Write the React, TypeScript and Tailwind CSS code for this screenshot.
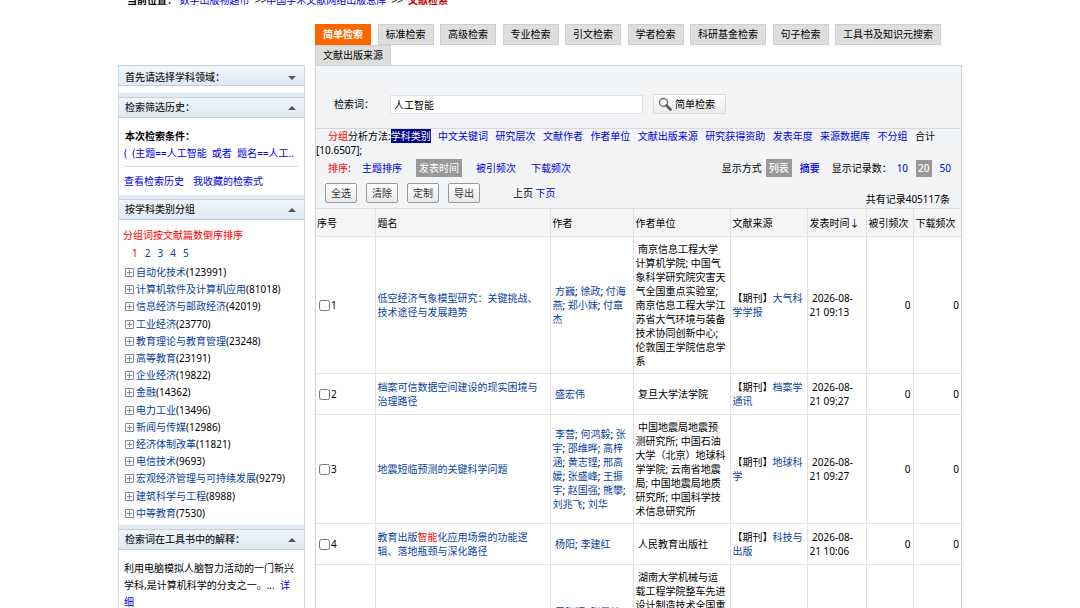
import type { ReactNode } from 'react';

const tabs = ['简单检索', '标准检索', '高级检索', '专业检索', '引文检索', '学者检索', '科研基金检索', '句子检索', '工具书及知识元搜索'];

const subjects = [
  { name: '自动化技术', count: 123991 },
  { name: '计算机软件及计算机应用', count: 81018 },
  { name: '信息经济与邮政经济', count: 42019 },
  { name: '工业经济', count: 23770 },
  { name: '教育理论与教育管理', count: 23248 },
  { name: '高等教育', count: 23191 },
  { name: '企业经济', count: 19822 },
  { name: '金融', count: 14362 },
  { name: '电力工业', count: 13496 },
  { name: '新闻与传媒', count: 12986 },
  { name: '经济体制改革', count: 11821 },
  { name: '电信技术', count: 9693 },
  { name: '宏观经济管理与可持续发展', count: 9279 },
  { name: '建筑科学与工程', count: 8988 },
  { name: '中等教育', count: 7530 },
];

const groupings = ['中文关键词', '研究层次', '文献作者', '作者单位', '文献出版来源', '研究获得资助', '发表年度', '来源数据库', '不分组'];

const columns = ['序号', '题名', '作者', '作者单位', '文献来源', '发表时间↓', '被引频次', '下载频次'];

interface Article {
  title: ReactNode;
  authors: string[];
  units: string;
  source: string;
  date: string;
}

const articles: Article[] = [
  {
    title: '低空经济气象模型研究：关键挑战、技术途径与发展趋势',
    authors: ['方巍', '徐政', '付海燕', '郑小妹', '付章杰'],
    units: '南京信息工程大学计算机学院; 中国气象科学研究院灾害天气全国重点实验室; 南京信息工程大学江苏省大气环境与装备技术协同创新中心; 伦敦国王学院信息学系',
    source: '大气科学学报',
    date: '2026-08-21 09:13',
  },
  {
    title: '档案可信数据空间建设的现实困境与治理路径',
    authors: ['盛宏伟'],
    units: '复旦大学法学院',
    source: '档案学通讯',
    date: '2026-08-21 09:27',
  },
  {
    title: '地震短临预测的关键科学问题',
    authors: ['李营', '何鸿毅', '张宇', '邵维晔', '高梓涵', '黄志铿', '邢高媛', '张盛峰', '王振宇', '赵国强', '熊攀', '刘兆飞', '刘华'],
    units: '中国地震局地震预测研究所; 中国石油大学（北京）地球科学学院; 云南省地震局; 中国地震局地质研究所; 中国科学技术信息研究所',
    source: '地球科学',
    date: '2026-08-21 09:27',
  },
  {
    title: (
      <>
        教育出版<span className="text-[#ff0000]">智能</span>化应用场景的功能逻辑、落地瓶颈与深化路径
      </>
    ),
    authors: ['杨阳', '李建红'],
    units: '人民教育出版社',
    source: '科技与出版',
    date: '2026-08-21 10:06',
  },
  {
    title: '面向智能制造的机械系统优化设计',
    authors: ['周张颖', '张雪松', '李明华', '王建国', '陈思远'],
    units: '湖南大学机械与运载工程学院整车先进设计制造技术全国重点实验室; 湖南大学机器人视觉感知与控制技术国家工程研究中心; 湖南省智能制造协同创新中心',
    source: '机械工程学报',
    date: '2026-08-21 10:12',
  },
];

function PanelHeader({ title, open = true }: { title: string; open?: boolean }) {
  return (
    <button
      type="button"
      className={`flex h-[21px] w-full items-center justify-between border-y border-[#c5d0dc] bg-linear-to-b from-[#f0f5fb] to-[#dfe9f4] pr-2 pl-[6px] font-medium text-[#222] ${
        open ? '' : 'pt-1'
      }`}
    >
      {title}
      <svg width="8" height="4" viewBox="0 0 8 4" className="fill-[#555]">
        <path d={open ? 'M4 0L8 4H0Z' : 'M0 0H8L4 4Z'} />
      </svg>
    </button>
  );
}

function Strip() {
  return <div className="h-1 bg-[#e2eaf3]" />;
}

function Link({ children, className = 'text-[#0000e0]' }: { children: ReactNode; className?: string }) {
  return (
    <a href="#" className={className}>
      {children}
    </a>
  );
}

function Sidebar() {
  return (
    <aside className="w-[187px] shrink-0 border-x border-[#d3dae2] bg-white">
      <PanelHeader title="首先请选择学科领域：" open={false} />
      <div className="h-[7px]" />
      <Strip />
      <PanelHeader title="检索筛选历史：" />
      <div className="px-[5px] pt-[10px] pb-px leading-[17px]">
        <p className="pl-px font-bold">本次检索条件：</p>
        <p className="overflow-hidden border-b border-[#ddd] pb-1 whitespace-nowrap">
          <Link>(&nbsp; (主题==人工智能&nbsp; 或者&nbsp; 题名==人工..</Link>
        </p>
        <p className="flex gap-[9px] pt-[6px] pb-1">
          <Link>查看检索历史</Link>
          <Link>我收藏的检索式</Link>
        </p>
      </div>
      <Strip />
      <PanelHeader title="按学科类别分组" />
      <div className="px-1 pt-[6px] pb-[3px]">
        <p className="leading-[18px] text-[#ff0000]">分组词按文献篇数倒序排序</p>
        <nav className="flex gap-[7px] pl-[9px] leading-[18px]">
          <Link className="text-[#ff0000]">1</Link>
          {[2, 3, 4, 5].map((page) => (
            <Link key={page} className="text-[#0a3fa0]">
              {page}
            </Link>
          ))}
        </nav>
        <ul className="mt-[2px] grid h-[258px]">
          {subjects.map((subject) => (
            <li key={subject.name} className="flex items-center pl-[2px] leading-[17px]">
              <button type="button" aria-label={subject.name} className="mr-[2px]">
                <svg width="9" height="9" viewBox="0 0 9 9" fill="none" className="stroke-[#7f8ba0]">
                  <path d="M.5 .5H8.500V8.500H.5ZM2 4.500H7M4.500 2V7" />
                </svg>
              </button>
              <Link className="text-[#0a3fa0]">{subject.name}</Link>({subject.count})
            </li>
          ))}
        </ul>
      </div>
      <Strip />
      <PanelHeader title="检索词在工具书中的解释：" />
      <p className="py-[10px] pr-2 pl-[5px] leading-[17px]">
        利用电脑模拟人脑智力活动的一门新兴学科,是计算机科学的分支之一。...&nbsp; <Link>详细</Link>
      </p>
    </aside>
  );
}

function SearchTabs() {
  return (
    <nav>
      <div className="flex max-w-[626px] justify-between">
        {tabs.map((tab, i) => (
          <button
            key={tab}
            type="button"
            className={`h-[21px] border px-[7px] whitespace-nowrap ${
              i === 0 ? 'border-[#ff6600] bg-[#ff6600] font-bold text-white' : 'border-[#d0d0d0] bg-[#dedede]'
            }`}
          >
            {tab}
          </button>
        ))}
      </div>
      <button type="button" className="block h-5 border border-b-0 border-[#d0d0d0] bg-[#dedede] px-[7px]">
        文献出版来源
      </button>
    </nav>
  );
}

function SearchForm() {
  return (
    <form className="flex h-[63px] items-center border-b border-[#d5d9de] pt-[14px] pl-[18px]">
      <label htmlFor="keyword" className="w-[56px]">
        检索词：
      </label>
      <input id="keyword" defaultValue="人工智能" className="h-[19px] w-[253px] border border-[#e1e4e8] bg-white px-[3px]" />
      <button
        type="button"
        className="ml-[10px] flex h-5 w-[73px] items-center gap-[3px] border border-[#dcdcdc] bg-linear-to-b from-white to-[#ebebeb] pl-1"
      >
        <svg width="14" height="14" viewBox="0 0 14 14" fill="none">
          <circle cx="5.500" cy="5.500" r="4" stroke="#777" strokeWidth="1.500" fill="#fafafa" />
          <path d="M8.500 8.500L12.500 12.500" stroke="#555" strokeWidth="2.500" strokeLinecap="round" />
        </svg>
        简单检索
      </button>
    </form>
  );
}

function Toolbar() {
  return (
    <div>
      <div className="leading-[14px]">
        <div className="flex items-center justify-between pr-[26px] pl-3 whitespace-nowrap">
          <p>
            <span className="text-[#ff0000]">分组</span>分析方法:
            <span className="inline-block bg-[#00008b] text-white">学科类别</span>
          </p>
          {groupings.map((item) => (
            <Link key={item}>{item}</Link>
          ))}
          <span>合计</span>
        </div>
        <p>[10.6507];</p>
      </div>
      <div className="mt-px flex h-5 items-center justify-between pr-[10px] pl-3">
        <div className="flex items-center">
          <span className="w-[34px]">
            <span className="text-[#ff0000]">排序</span>:
          </span>
          <Link>主题排序</Link>
          <span className="mx-[14px] bg-[#999] px-[3px] leading-[18px] text-white">发表时间</span>
          <Link>被引频次</Link>
          <span className="w-[15px]" />
          <Link>下载频次</Link>
        </div>
        <div className="flex items-center">
          显示方式
          <span className="mr-2 ml-1 bg-[#999] px-[3px] leading-[18px] font-medium text-white">列表</span>
          <Link className="font-medium text-[#0000e0]">摘要</Link>
          <span className="ml-3 w-[65px]">显示记录数：</span>
          <Link>10</Link>
          <span className="mx-2 bg-[#999] px-[2px] leading-[17px] font-medium text-white">20</span>
          <Link>50</Link>
        </div>
      </div>
      <div className="flex h-[30px] items-center justify-between pr-[11px] pl-[9px]">
        <div className="flex items-center gap-[9px]">
          {['全选', '清除', '定制', '导出'].map((label) => (
            <button
              key={label}
              type="button"
              className="h-5 w-8 rounded-xs border border-[#999] bg-linear-to-b from-white to-[#e9e9e9] text-[#333]"
            >
              {label}
            </button>
          ))}
          <span className="ml-6">
            上页 <Link>下页</Link>
          </span>
        </div>
        <span className="self-end leading-[18px]">共有记录405117条</span>
      </div>
    </div>
  );
}

function ResultTable() {
  return (
    <table className="w-full table-fixed border-collapse leading-[14px]">
      <colgroup>
        <col className="w-[59px]" />
        <col />
        <col className="w-[83px]" />
        <col className="w-[97px]" />
        <col className="w-[77px]" />
        <col className="w-[59px]" />
        <col className="w-[47px]" />
        <col className="w-[48px]" />
      </colgroup>
      <thead>
        <tr className="h-7 bg-[#f5f5f5]">
          {columns.map((column) => (
            <th
              key={column}
              className="border border-[#e2e2e2] px-[2px] text-left font-normal whitespace-nowrap first:border-l-0 first:pl-px last:border-r-0"
            >
              {column}
            </th>
          ))}
        </tr>
      </thead>
      <tbody className="bg-white [&_td]:border [&_td]:border-[#e2e2e2] [&_td]:px-[2px] [&_td]:py-[5px] [&_td:first-child]:border-l-0 [&_td:last-child]:border-r-0 [&_td:nth-child(2)]:pr-[10px]">
        {articles.map((article, i) => (
          <tr key={article.units} className="h-[41px]">
            <td>
              <label className="flex items-center">
                <input type="checkbox" className="mr-px ml-px h-[11px] w-[11px]" />
                {i + 1}
              </label>
            </td>
            <td>
              <Link className="text-[#0a3fa0]">{article.title}</Link>
            </td>
            <td>
              &nbsp;
              {article.authors.map((author, n) => (
                <span key={author}>
                  {n > 0 && '; '}
                  <Link className="text-[#0a3fa0]">{author}</Link>
                </span>
              ))}
            </td>
            <td>&nbsp;{article.units}</td>
            <td>
              【期刊】<Link className="text-[#0a3fa0]">{article.source}</Link>
            </td>
            <td>&nbsp;{article.date}</td>
            <td className="text-right">0</td>
            <td className="text-right">0</td>
          </tr>
        ))}
      </tbody>
    </table>
  );
}

export default function App() {
  return (
    <div className="h-screen overflow-hidden bg-white font-['Noto_Sans','Noto_Sans_CJK_SC',sans-serif] text-[10px] text-black">
      <div className="mx-auto w-full max-w-[844px]">
        <p className="-mt-2 pl-[9px] leading-4">
          <b>当前位置：</b>{' '}
          <Link>数字出版物超市</Link>&nbsp; &gt;&gt;<Link>中国学术文献网络出版总库</Link>&nbsp; &gt;&gt;&nbsp;{' '}
          <b className="text-[#c00000]">文献检索</b>
        </p>
        <div className="mt-4 flex items-start gap-[10px]">
          <div className="pt-[41px]">
            <Sidebar />
          </div>
          <main className="min-w-0 flex-1">
            <SearchTabs />
            <section className="border border-[#ced3d8] bg-[#f2f4f6]">
              <SearchForm />
              <Toolbar />
              <ResultTable />
            </section>
          </main>
        </div>
      </div>
    </div>
  );
}
